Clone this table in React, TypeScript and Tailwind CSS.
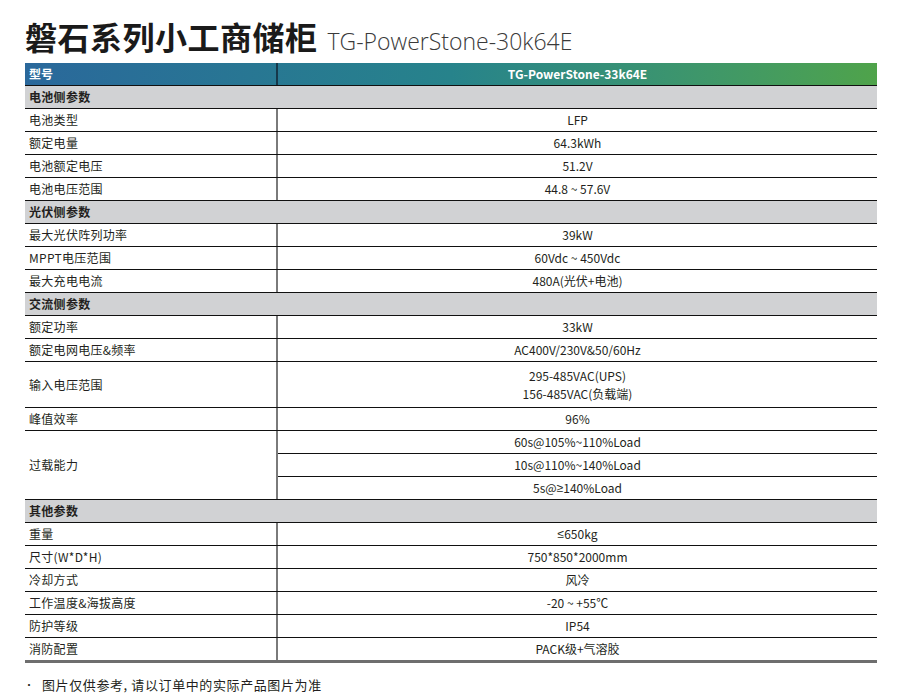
import React from "react";

type Row =
  | { kind: "section"; label: string }
  | { kind: "row"; label: string; values: React.ReactNode[]; tall?: boolean };

const sym = (s: string) => <span style={{ fontFamily: '"Liberation Sans", sans-serif' }}>{s}</span>;

const rows: Row[] = [
  { kind: "section", label: "电池侧参数" },
  { kind: "row", label: "电池类型", values: ["LFP"] },
  { kind: "row", label: "额定电量", values: ["64.3kWh"] },
  { kind: "row", label: "电池额定电压", values: ["51.2V"] },
  { kind: "row", label: "电池电压范围", values: ["44.8 ~ 57.6V"] },
  { kind: "section", label: "光伏侧参数" },
  { kind: "row", label: "最大光伏阵列功率", values: ["39kW"] },
  { kind: "row", label: "MPPT电压范围", values: ["60Vdc ~ 450Vdc"] },
  { kind: "row", label: "最大充电电流", values: ["480A(光伏+电池)"] },
  { kind: "section", label: "交流侧参数" },
  { kind: "row", label: "额定功率", values: ["33kW"] },
  { kind: "row", label: "额定电网电压&频率", values: ["AC400V/230V&50/60Hz"] },
  { kind: "row", label: "输入电压范围", values: ["295-485VAC(UPS)", "156-485VAC(负载端)"], tall: true },
  { kind: "row", label: "峰值效率", values: ["96%"] },
  {
    kind: "row",
    label: "过载能力",
    values: ["60s@105%~110%Load", "10s@110%~140%Load", <>5s@{sym("≥")}140%Load</>],
  },
  { kind: "section", label: "其他参数" },
  { kind: "row", label: "重量", values: [<>{sym("≤")}650kg</>] },
  { kind: "row", label: "尺寸(W*D*H)", values: ["750*850*2000mm"] },
  { kind: "row", label: "冷却方式", values: ["风冷"] },
  { kind: "row", label: "工作温度&海拔高度", values: ["-20 ~ +55℃"] },
  { kind: "row", label: "防护等级", values: ["IP54"] },
  { kind: "row", label: "消防配置", values: ["PACK级+气溶胶"] },
];

const font = { fontFamily: '"Noto Sans CJK SC", "Noto Sans", sans-serif' };

export default function App() {
  return (
    <div className="w-[917px] h-[695px] bg-white text-[#231f20] overflow-hidden" style={font}>
      <div className="pl-[25px] pt-[16px] flex items-baseline h-[63px]">
        <span className="text-[32px] font-bold leading-[40px] tracking-[0.5px] text-[#1a1a1a]">磐石系列小工商储柜</span>
        <span
          className="ml-[10px] text-[23px] font-light leading-[40px] text-[#3a3a3a]"
          style={{ fontFamily: '"Open Sans", "Noto Sans", sans-serif' }}
        >
          TG-PowerStone-30k64E
        </span>
      </div>
      <div className="ml-[25px] w-[852px]">
        <div className="flex h-[23px] bg-gradient-to-r from-[#2a689b] via-[#27838b] to-[#4fa34a] border-b border-[#111] text-white font-bold text-[12px]">
          <div className="w-[253px] border-r-2 border-[#16384a] pl-[4px] flex items-center">型号</div>
          <div className="flex-1 flex items-center justify-center">TG-PowerStone-33k64E</div>
        </div>
        {rows.map((r, i) => {
          if (r.kind === "section") {
            return (
              <div
                key={i}
                className="h-[23px] bg-[#d1d2d4] border-b border-[#111] flex items-center pl-[4px] text-[12px] font-bold tracking-[0.3px]"
              >
                {r.label}
              </div>
            );
          }
          const last = i === rows.length - 1;
          const border = last ? "border-b-[3px] border-[#6e6e6e]" : "border-b border-[#111]";
          if (r.tall) {
            return (
              <div key={i} className={`flex h-[46px] text-[12px] ${border}`}>
                <div className="w-[253px] border-r-2 border-[#7a7a7a] pl-[4px] flex items-center tracking-[0.3px]">
                  {r.label}
                </div>
                <div className="flex-1 flex flex-col items-center justify-center leading-[18px]">
                  {r.values.map((v, j) => (
                    <div key={j}>{v}</div>
                  ))}
                </div>
              </div>
            );
          }
          return (
            <div key={i} className={`flex text-[12px] ${border}`}>
              <div className="w-[253px] border-r-2 border-[#7a7a7a] pl-[4px] flex items-center tracking-[0.3px]">
                {r.label}
              </div>
              <div className="flex-1 flex flex-col">
                {r.values.map((v, j) => {
                  const notLast = j < r.values.length - 1;
                  return (
                    <div
                      key={j}
                      className={`flex items-center justify-center ${notLast ? "h-[23px] border-b border-[#111]" : "h-[22px]"}`}
                    >
                      {v}
                    </div>
                  );
                })}
              </div>
            </div>
          );
        })}
      </div>
      <div className="pl-[24px] mt-[13px] flex items-center text-[13px] leading-[18px] text-[#231f20]">
        <span className="mr-[8px] text-[10px]">•</span>
        <span className="tracking-[0.6px]">图片仅供参考, 请以订单中的实际产品图片为准</span>
      </div>
    </div>
  );
}
